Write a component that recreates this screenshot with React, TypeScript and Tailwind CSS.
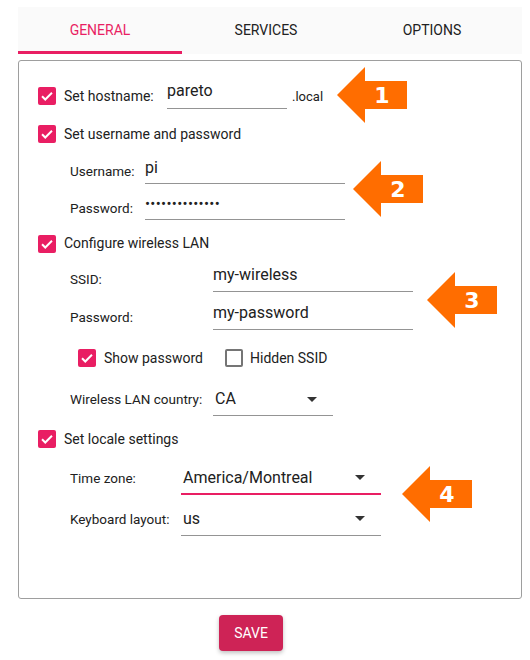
import React from "react";

const Check = ({ checked }: { checked: boolean }) =>
  checked ? (
    <div className="w-[18px] h-[18px] shrink-0 rounded-[2px] bg-[#e91e63] flex items-center justify-center">
      <svg width="14" height="14" viewBox="0 0 24 24">
        <path d="M3.5 12.5l5.5 5.5L20.5 6.5" stroke="white" strokeWidth="3.4" fill="none" />
      </svg>
    </div>
  ) : (
    <div className="w-[18px] h-[18px] shrink-0 rounded-[2px] border-2 border-[#757575]" />
  );

const Caret = () => (
  <svg width="10" height="5" viewBox="0 0 10 5">
    <path d="M0 0h10L5 5z" fill="#333" />
  </svg>
);

const Arrow = ({ n, x, y }: { n: string; x: number; y: number }) => (
  <div className="absolute w-[70px] h-[56px]" style={{ left: x, top: y }}>
    <svg width="70" height="56" viewBox="0 0 70 56" className="absolute inset-0">
      <path d="M0 28L28 0V14H70V42H28V56Z" fill="#ff6d00" />
    </svg>
    <span className="absolute left-[32px] w-[26px] top-0 h-[56px] flex items-center justify-center text-white text-[22px] font-bold [font-family:'DejaVu_Sans',sans-serif]">
      {n}
    </span>
  </div>
);

export default function App() {
  return (
    <div className="relative w-[530px] h-[660px] bg-white overflow-hidden [font-family:Roboto,sans-serif] text-[#212121]">
      {/* Tabs */}
      <div className="ml-[18px] mt-[7px] w-[504px] h-[47px] bg-[#fafafa] flex text-[14px]">
        <div className="w-[164px] h-full flex items-center justify-center border-b-[3px] border-[#e91e63] text-[#e91e63] pt-[3px]">
          GENERAL
        </div>
        <div className="w-[168px] h-full flex items-center justify-center">SERVICES</div>
        <div className="w-[164px] h-full flex items-center justify-center">OPTIONS</div>
      </div>

      {/* Panel */}
      <div className="ml-[18px] mt-[6px] w-[504px] h-[539px] border border-[#9e9e9e] rounded-[3px] pt-[16px] flex flex-col">
        {/* hostname */}
        <div className="h-[38px] flex items-center pl-[19px]">
          <Check checked />
          <span className="ml-[8px] w-[103px] text-[14px]">Set hostname:</span>
          <div className="w-[120px] h-[26px] border-b border-[#949494] text-[16px] leading-[16px]">pareto</div>
          <span className="ml-[5px] text-[13px] mt-[2px]">.local</span>
        </div>
        {/* username/password */}
        <div className="h-[38px] flex items-center pl-[19px]">
          <Check checked />
          <span className="ml-[8px] text-[14px]">Set username and password</span>
        </div>
        <div className="h-[37px] flex items-center pl-[51px]">
          <span className="w-[75px] text-[13.5px]">Username:</span>
          <div className="w-[200px] h-[24px] border-b border-[#949494] text-[16px] leading-[16px]">pi</div>
        </div>
        <div className="h-[36px] flex items-center pl-[51px]">
          <span className="w-[75px] text-[13.5px]">Password:</span>
          <div className="w-[200px] h-[24px] border-b border-[#949494] text-[15px] leading-[16px] tracking-[0.3px]">
            ••••••••••••••
          </div>
        </div>
        {/* wireless */}
        <div className="h-[35px] flex items-center pl-[19px]">
          <Check checked />
          <span className="ml-[8px] text-[14px]">Configure wireless LAN</span>
        </div>
        <div className="h-[37px] flex items-center pl-[51px]">
          <span className="w-[143px] text-[13.5px]">SSID:</span>
          <div className="w-[200px] h-[25px] border-b border-[#949494] text-[16px] leading-[16px]">my-wireless</div>
        </div>
        <div className="h-[39px] flex items-center pl-[51px]">
          <span className="w-[143px] text-[13.5px]">Password:</span>
          <div className="w-[200px] h-[25px] border-b border-[#949494] text-[16px] leading-[16px]">my-password</div>
        </div>
        <div className="h-[42px] flex items-center pl-[59px] text-[14px]">
          <div className="w-[147px] flex items-center gap-[8px]">
            <Check checked />
            <span>Show password</span>
          </div>
          <div className="flex items-center gap-[7px]">
            <Check checked={false} />
            <span>Hidden SSID</span>
          </div>
        </div>
        <div className="h-[41px] flex items-center pl-[51px]">
          <span className="w-[143px] text-[13.5px]">Wireless LAN country:</span>
          <div className="w-[120px] h-[33px] border-b border-[#949494] flex items-center justify-between pl-[2px] pr-[16px] text-[16px]">
            <span>CA</span>
            <Caret />
          </div>
        </div>
        {/* locale */}
        <div className="h-[38px] flex items-center pl-[19px]">
          <Check checked />
          <span className="ml-[8px] text-[14px]">Set locale settings</span>
        </div>
        <div className="h-[40px] flex items-center pl-[51px]">
          <span className="w-[111px] text-[13.5px]">Time zone:</span>
          <div className="w-[200px] h-[33px] border-b-2 border-[#e91e63] flex items-center justify-between pl-[2px] pr-[16px] text-[16px] pt-[1px]">
            <span>America/Montreal</span>
            <Caret />
          </div>
        </div>
        <div className="h-[42px] flex items-center pl-[51px]">
          <span className="w-[111px] text-[13.5px]">Keyboard layout:</span>
          <div className="w-[200px] h-[33px] border-b border-[#949494] flex items-center justify-between pl-[2px] pr-[16px] text-[16px]">
            <span>us</span>
            <Caret />
          </div>
        </div>
      </div>

      {/* Save */}
      <div className="ml-[219px] mt-[16px] w-[64px] h-[36px] rounded-[4px] bg-[#ce2356] text-white text-[14px] flex items-center justify-center shadow-[0_2px_4px_rgba(0,0,0,0.25)]">
        SAVE
      </div>

      <Arrow n="1" x={337} y={67} />
      <Arrow n="2" x={353} y={161} />
      <Arrow n="3" x={427} y={272} />
      <Arrow n="4" x={402} y={466} />
    </div>
  );
}
